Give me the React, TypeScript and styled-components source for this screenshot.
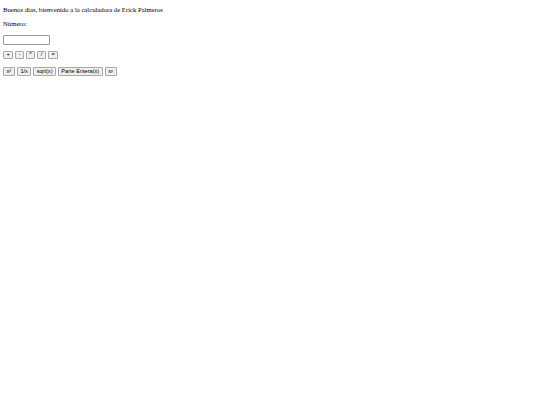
import React from 'react';
import styled, {createGlobalStyle} from "styled-components";

const GlobalStyle = createGlobalStyle`
  html, body {
    margin: 0;
    padding: 0;
    background: #ffffff;
  }
  body {
    font-family: "Liberation Serif", "Times New Roman", serif;
  }
`;

const Page = styled.main`
  display: flex;
  flex-direction: column;
  align-items: flex-start;
  padding: 0 3px;
  font-size: 6.7px;
  line-height: 7.6px;
  color: #000;
`;

const Text = styled.p<{ top: number }>`
  margin: ${props => props.top}px 0 0 0;
`;

const NumberInput = styled.input`
  margin-top: 7px;
  width: 47px;
  height: 10px;
  box-sizing: border-box;
  border: 1px solid #9a9a9a;
  border-radius: 1px;
  padding: 0 2px;
  font-size: 5px;
  outline: none;
`;

const ButtonRow = styled.div<{ top: number; height: number }>`
  display: flex;
  gap: 2px;
  margin-top: ${props => props.top}px;
  height: ${props => props.height}px;
`;

const CalcButton = styled.button<{ minWidth?: number }>`
  box-sizing: border-box;
  min-width: ${props => props.minWidth ?? 0}px;
  height: 100%;
  padding: 0 2.4px;
  border: 1px solid #a8a8a8;
  border-radius: 1px;
  background: #efefef;
  font-family: "Liberation Sans", Arial, sans-serif;
  font-size: 5.6px;
  line-height: 1;
  color: #000;
  display: flex;
  align-items: center;
  justify-content: center;

  sup {
    font-size: 3.8px;
    line-height: 0;
    position: relative;
    top: -1px;
  }
`;

const operators = ["+", "-", "*", "/", "="];

function App() {
    return (
        <>
            <GlobalStyle/>
            <Page>
                <Text top={6.2}>Buenos días, bienvenido a la calculadora de Erick Palmeros</Text>
                <Text top={6.4}>Número:</Text>
                <NumberInput type="text"/>
                <ButtonRow top={6.5} height={8}>
                    {operators.map(op => <CalcButton key={op} minWidth={9}>{op}</CalcButton>)}
                </ButtonRow>
                <ButtonRow top={8} height={9}>
                    <CalcButton minWidth={12}>x<sup>2</sup></CalcButton>
                    <CalcButton>1/x</CalcButton>
                    <CalcButton>sqrt(x)</CalcButton>
                    <CalcButton>Parte Entera(x)</CalcButton>
                    <CalcButton minWidth={12}>x<sup>y</sup></CalcButton>
                </ButtonRow>
            </Page>
        </>
    );
}

export default App;
